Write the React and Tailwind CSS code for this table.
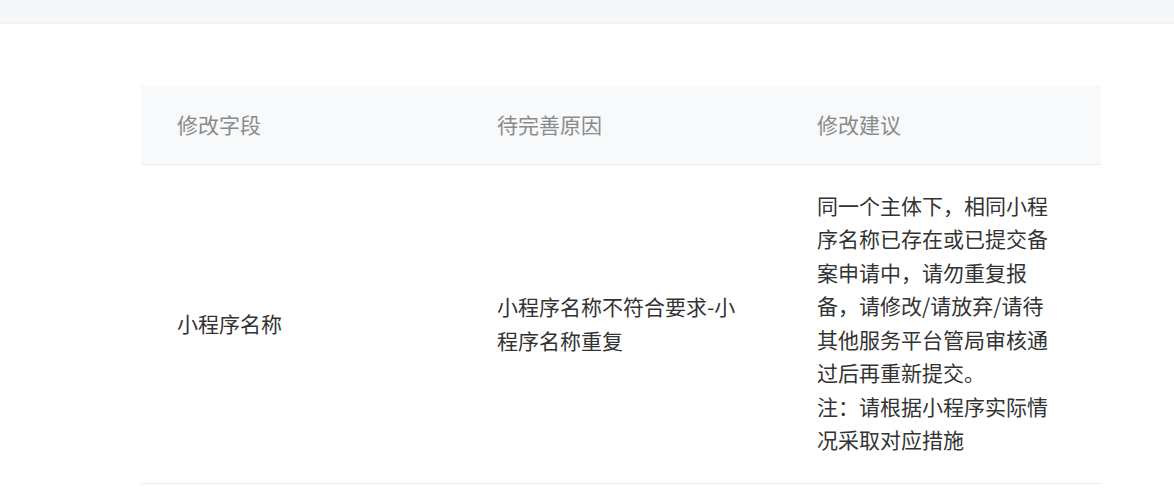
const rows = [
  {
    field: "小程序名称",
    reason: "小程序名称不符合要求-小程序名称重复",
    advice: [
      "同一个主体下，相同小程序名称已存在或已提交备案申请中，请勿重复报备，请修改/请放弃/请待其他服务平台管局审核通过后再重新提交。",
      "注：请根据小程序实际情况采取对应措施",
    ],
  },
];

const cell = "pl-[36px] pr-[42px] align-middle";

export default function App() {
  return (
    <div
      className="min-h-[499px] bg-white"
      style={{ fontFamily: '"Noto Sans CJK SC", "Noto Sans", sans-serif' }}
    >
      <div className="h-[24px] bg-[#f5f7f9] border-b border-[#f0f3f6]" />
      <div className="pt-[62px] pl-[141px]">
        <table className="w-[960px] table-fixed border-collapse text-[21px] leading-[33.5px]">
          <thead>
            <tr className="h-[78px] bg-[#f7f9fb] border-b border-[#e9ecef] text-[#8a8a8a]">
              <th className={cell + " text-left font-normal"}>修改字段</th>
              <th className={cell + " text-left font-normal"}>待完善原因</th>
              <th className={cell + " text-left font-normal"}>修改建议</th>
            </tr>
          </thead>
          <tbody>
            {rows.map((r) => (
              <tr key={r.field} className="border-b border-[#e9ecef] text-[#333333]">
                <td className={cell}>{r.field}</td>
                <td className={cell}>{r.reason}</td>
                <td className={cell + " pt-[24px] pb-[26px]"}>
                  {r.advice.map((a) => (
                    <div key={a}>{a}</div>
                  ))}
                </td>
              </tr>
            ))}
          </tbody>
        </table>
      </div>
    </div>
  );
}
